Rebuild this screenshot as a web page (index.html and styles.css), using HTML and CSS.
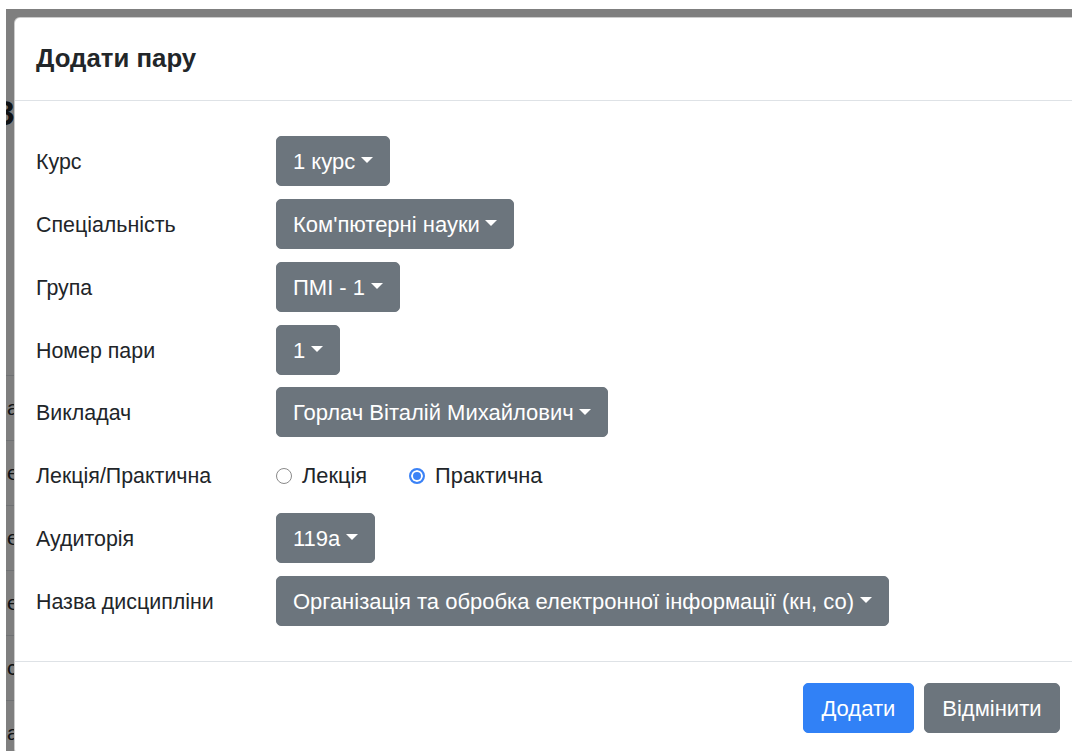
FILE: index.html
```html
<!DOCTYPE html>
<html lang="uk">
<head>
<meta charset="utf-8">
<title>Додати пару</title>
<link rel="stylesheet" href="styles.css">
</head>
<body>
<div class="screen">
  <div class="page">
    <h1 class="page-title">З</h1>
    <table class="schedule">
      <tr><td>а</td></tr>
      <tr><td>е</td></tr>
      <tr><td>е</td></tr>
      <tr><td>е</td></tr>
      <tr><td>с</td></tr>
      <tr><td>а</td></tr>
    </table>
  </div>
  <div class="backdrop"></div>
  <div class="modal">
    <div class="modal-header">
      <h5 class="modal-title">Додати пару</h5>
    </div>
    <div class="modal-body">
      <div class="field">
        <span class="field-label">Курс</span>
        <button class="btn btn-secondary dropdown-toggle" type="button">1 курс</button>
      </div>
      <div class="field">
        <span class="field-label">Спеціальність</span>
        <button class="btn btn-secondary dropdown-toggle" type="button">Ком'пютерні науки</button>
      </div>
      <div class="field">
        <span class="field-label">Група</span>
        <button class="btn btn-secondary dropdown-toggle" type="button">ПМІ - 1</button>
      </div>
      <div class="field">
        <span class="field-label">Номер пари</span>
        <button class="btn btn-secondary dropdown-toggle" type="button">1</button>
      </div>
      <div class="field">
        <span class="field-label">Викладач</span>
        <button class="btn btn-secondary dropdown-toggle" type="button">Горлач Віталій Михайлович</button>
      </div>
      <div class="field">
        <span class="field-label">Лекція/Практична</span>
        <div class="radios">
          <label class="radio"><input type="radio" name="kind">Лекція</label>
          <label class="radio"><input type="radio" name="kind" checked>Практична</label>
        </div>
      </div>
      <div class="field">
        <span class="field-label">Аудиторія</span>
        <button class="btn btn-secondary dropdown-toggle" type="button">119a</button>
      </div>
      <div class="field">
        <span class="field-label">Назва дисципліни</span>
        <button class="btn btn-secondary dropdown-toggle" type="button">Організація та обробка електронної інформації (кн, со)</button>
      </div>
    </div>
    <div class="modal-footer">
      <button class="btn btn-primary" type="button">Додати</button>
      <button class="btn btn-secondary" type="button">Відмінити</button>
    </div>
  </div>
</div>
</body>
</html>
```
FILE: styles.css
```css
html,
body {
  margin: 0;
  height: 100%;
  overflow: hidden;
  background: #fff;
}

body {
  font-family: "Liberation Sans", Arial, sans-serif;
  color: #212529;
}

/* visible area of the page under the dialog */
.screen {
  position: relative;
  margin: 9px 0 0 6px;
  height: 742px;
  overflow: hidden;
  background: #fff;
}

.page {
  padding-top: 84px;
}

.page-title {
  margin: 0 0 0 -13px;
  font-size: 35px;
  line-height: 40px;
  font-weight: 700;
}

.schedule {
  margin-top: 242px;
  width: 100%;
  border-collapse: collapse;
}

.schedule td {
  height: 64px;
  padding: 0 0 0 1px;
  border-top: 1px solid #dee2e6;
  font-size: 21px;
}

.backdrop {
  position: absolute;
  inset: 0;
  background: rgba(0, 0, 0, 0.5);
}

/* dialog */
.modal {
  position: absolute;
  left: 8px;
  top: 8px;
  width: 1068px;
  box-sizing: border-box;
  background: #fff;
  border: 1px solid rgba(0, 0, 0, 0.2);
  border-radius: 6px;
}

.modal-header {
  padding: 21px 21px 22px;
  border-bottom: 1px solid #dee2e6;
}

.modal-title {
  margin: 0;
  font-size: 25.8px;
  line-height: 39px;
  font-weight: 700;
  color: #222629;
}

.modal-body {
  display: flex;
  flex-direction: column;
  gap: 12.85px;
  padding: 35px 21px;
}

.field {
  display: flex;
  align-items: center;
  height: 50px;
}

.field-label {
  flex: none;
  width: 240px;
  padding-top: 3px;
  font-size: 21.4px;
}

.btn {
  font-family: inherit;
  font-size: 22px;
  line-height: 32px;
  padding: 9px 16px 7px;
  border: 1px solid transparent;
  border-radius: 5px;
  color: #fff;
  cursor: pointer;
  white-space: nowrap;
}

.btn-secondary {
  background: #6c757d;
  border-color: #6c757d;
}

.btn-primary {
  background: #3181f6;
  border-color: #3181f6;
}

.modal-footer .btn {
  padding-left: 17.5px;
  padding-right: 17.5px;
}

.dropdown-toggle::after {
  content: "";
  display: inline-block;
  margin-left: 0.255em;
  vertical-align: 0.255em;
  border-top: 0.3em solid;
  border-right: 0.3em solid transparent;
  border-left: 0.3em solid transparent;
}

.radios {
  display: flex;
  align-items: center;
  padding-top: 2px;
}

.radio {
  display: inline-flex;
  align-items: center;
  margin-right: 42px;
  font-size: 21.8px;
}

.radio input {
  appearance: none;
  -webkit-appearance: none;
  box-sizing: border-box;
  width: 16px;
  height: 16px;
  margin: 0 10px 0 0;
  border: 1.5px solid #8a8a8a;
  border-radius: 50%;
  background: #fff;
}

.radio input:checked {
  border: 2px solid #3b82f6;
  background: #3b82f6;
  box-shadow: inset 0 0 0 2px #fff;
}

.modal-footer {
  display: flex;
  justify-content: flex-end;
  gap: 10px;
  padding: 21px;
  border-top: 1px solid #dee2e6;
}
```
